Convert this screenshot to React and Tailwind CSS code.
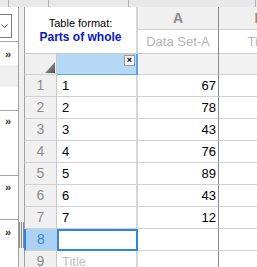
import React from 'react';

const rows = [
  { n: 1, x: '1', a: '67' },
  { n: 2, x: '2', a: '78' },
  { n: 3, x: '3', a: '43' },
  { n: 4, x: '4', a: '76' },
  { n: 5, x: '5', a: '89' },
  { n: 6, x: '6', a: '43' },
  { n: 7, x: '7', a: '12' },
];

function Chevrons() {
  return <div className="pl-[5px] text-[11px] leading-[11px] text-[#333] font-bold">»</div>;
}

function LeftPanel() {
  return (
    <div className="w-[19px] shrink-0 border-r border-[#a0a0a0] bg-white flex flex-col">
      <div className="h-[35px] shrink-0 border-b border-[#a8a8a8] pt-[7px]">
        <div className="w-[12px] h-[24px] border-y border-r border-[#7c7c7c] flex items-center pl-[1px]">
          <svg width="7" height="4" viewBox="0 0 7 4">
            <path d="M0.5 0.5 L3.5 3.5 L6.5 0.5" fill="none" stroke="#555" strokeWidth="1" />
          </svg>
        </div>
      </div>
      <div className="h-[69px] shrink-0 border-b border-[#a8a8a8] flex flex-col">
        <div className="h-[23px] pt-[7px]">
          <Chevrons />
        </div>
        <div className="h-[22px] bg-[#f0f0f0]" />
      </div>
      <div className="h-[65px] shrink-0 border-b border-[#a8a8a8] pt-[5px]">
        <Chevrons />
      </div>
      <div className="h-[44px] shrink-0 border-b border-[#a8a8a8] pt-[6px]">
        <Chevrons />
      </div>
      <div className="flex-1 pt-[7px]">
        <Chevrons />
      </div>
    </div>
  );
}

function Splitter() {
  return (
    <div className="w-[5px] shrink-0 bg-[#f0f0f0] flex flex-col items-center">
      <div className="mt-[215px] flex gap-[1px]">
        <div className="w-px h-[26px] bg-[#8a8a8a]" />
        <div className="w-px h-[26px] bg-[#8a8a8a]" />
        <div className="w-px h-[26px] bg-[#8a8a8a]" />
      </div>
    </div>
  );
}

function Triangle() {
  return (
    <svg width="10" height="11" viewBox="0 0 10 11">
      <defs>
        <linearGradient id="tri" x1="0" y1="0" x2="1" y2="1">
          <stop offset="0" stopColor="#bdbdbd" />
          <stop offset="1" stopColor="#4a4a4a" />
        </linearGradient>
      </defs>
      <polygon points="10,0 10,11 0,11" fill="url(#tri)" />
    </svg>
  );
}

function Grid() {
  const rh = 'w-[33px] shrink-0 border-l border-l-[#a0a0a0] border-r border-r-[#c8c8c8] border-b border-b-[#d0d0d0] bg-[#f0f0f0] flex items-center justify-center text-[14px] text-[#8c8c8c]';
  const cx = 'w-[81px] shrink-0 border-r-2 border-r-[#d6d6d6] border-b border-b-[#d0d0d0] flex items-center pl-[5px] text-[13px]';
  const ca = 'w-[81px] shrink-0 border-r border-r-[#8a8a8a] border-b border-b-[#d0d0d0] flex items-center justify-end pr-[2px] text-[13px]';
  const cb = 'w-[81px] shrink-0 border-b border-b-[#d0d0d0]';

  return (
    <div className="flex flex-col min-w-0">
      {/* header */}
      <div className="flex h-[47px] shrink-0">
        <div className="w-[114px] shrink-0 border-l border-l-[#a0a0a0] border-r-2 border-r-[#d6d6d6] border-b border-b-[#c8c8c8] bg-white flex flex-col items-center pt-[10px]">
          <div className="text-[11px] leading-[13px] text-black">Table format:</div>
          <div className="text-[12px] leading-[14px] font-bold text-[#0a14c4]">Parts of whole</div>
        </div>
        <div className="w-[81px] shrink-0 border-r border-r-[#8a8a8a] flex flex-col">
          <div className="h-[23px] bg-[#f0f0f0] border-b border-b-[#d0d0d0] flex items-center justify-center text-[14px] font-bold text-[#8c8c8c]">A</div>
          <div className="h-[24px] bg-white border-b border-b-[#c8c8c8] flex items-center justify-center text-[13px] text-[#b4b4b4]">Data Set-A</div>
        </div>
        <div className="w-[81px] shrink-0 flex flex-col">
          <div className="h-[23px] bg-[#f0f0f0] border-b border-b-[#d0d0d0] flex items-center justify-center text-[14px] font-bold text-[#8c8c8c]">B</div>
          <div className="h-[24px] bg-white border-b border-b-[#c8c8c8] flex items-center justify-center text-[13px] text-[#b4b4b4]">Title</div>
        </div>
      </div>

      {/* title row */}
      <div className="flex h-[21px] shrink-0">
        <div className="w-[33px] shrink-0 border-l border-l-[#a0a0a0] border-r border-r-[#c8c8c8] border-b border-b-[#d0d0d0] bg-[#f0f0f0] flex items-end justify-end pr-[1px] pb-px">
          <Triangle />
        </div>
        <div className="w-[81px] shrink-0 bg-[#b5d8f5] border-r-2 border-r-[#5aa6e4] border-b border-b-[#5aa6e4] flex justify-end items-start pt-[1px] pr-[1px]">
          <div className="w-[11px] h-[11px] bg-[#f2f2f2] border border-[#9a9a9a] flex items-center justify-center text-[9px] leading-[9px] font-bold text-black">×</div>
        </div>
        <div className="w-[81px] shrink-0 bg-[#f2f2f2] border-r border-r-[#8a8a8a] border-b border-b-[#d0d0d0]" />
        <div className="w-[81px] shrink-0 bg-[#f2f2f2] border-b border-b-[#d0d0d0]" />
      </div>

      {rows.map((r) => (
        <div key={r.n} className="flex h-[22px] shrink-0">
          <div className={rh}>{r.n}</div>
          <div className={cx + ' text-black'}>{r.x}</div>
          <div className={ca + ' text-black'}>{r.a}</div>
          <div className={cb} />
        </div>
      ))}

      {/* selected row */}
      <div className="flex h-[22px] shrink-0">
        <div className="w-[33px] shrink-0 border-l-2 border-l-[#2b8ad8] border-r border-r-[#c8c8c8] border-b border-b-[#d0d0d0] bg-[#abd2f4] flex items-center justify-center text-[14px] text-[#3a86cc]">8</div>
        <div className="w-[81px] shrink-0 border-2 border-[#2b8ad8]" />
        <div className={ca} />
        <div className={cb} />
      </div>

      <div className="flex h-[22px] shrink-0">
        <div className={rh}>9</div>
        <div className={cx + ' text-[#c0c0c0]'}>Title</div>
        <div className={ca} />
        <div className={cb} />
      </div>
    </div>
  );
}

export default function App() {
  return (
    <div className="w-[257px] h-[267px] overflow-hidden bg-white flex flex-col font-['Liberation_Sans',Arial,sans-serif]">
      <div className="h-[7px] shrink-0 bg-[#e8e8e8] flex">
        <div className="w-[8px] shrink-0" />
        <div className="w-[40px] shrink-0 border-l border-[#b4b4b4]" />
        <div className="w-[80px] shrink-0 border-l border-[#b4b4b4]" />
        <div className="w-[127px] shrink-0 border-l border-[#b4b4b4]" />
        <div className="flex-1 border-l border-[#b4b4b4]" />
      </div>
      <div className="flex flex-1 min-h-0">
        <LeftPanel />
        <Splitter />
        <Grid />
      </div>
    </div>
  );
}
